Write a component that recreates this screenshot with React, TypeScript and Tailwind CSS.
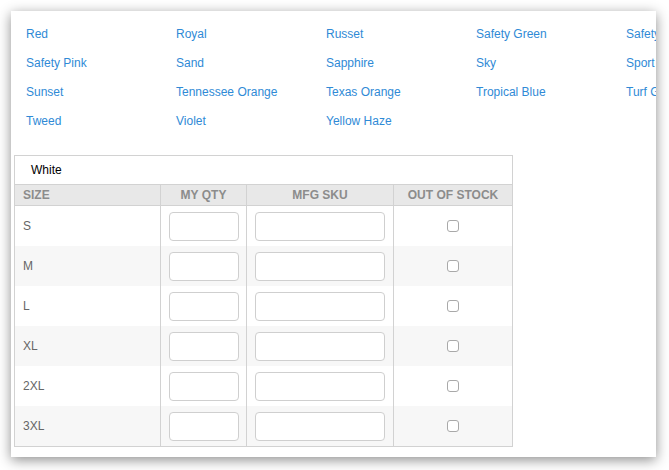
import React from "react";

const colors = [
  "Red", "Royal", "Russet", "Safety Green", "Safety Orange",
  "Safety Pink", "Sand", "Sapphire", "Sky", "Sport Grey",
  "Sunset", "Tennessee Orange", "Texas Orange", "Tropical Blue", "Turf Green",
  "Tweed", "Violet", "Yellow Haze",
];

const sizes = ["S", "M", "L", "XL", "2XL", "3XL"];

export default function App() {
  return (
    <div
      className="w-[669px] h-[470px] bg-white pt-[11px] pl-[11px]"
      style={{ fontFamily: '"Liberation Sans", Arial, sans-serif' }}
    >
      <div className="w-[645px] h-[446px] bg-white overflow-hidden shadow-[0_3px_12px_rgba(0,0,0,0.45)]">
        <div className="grid grid-cols-[150px_150px_150px_150px_150px] w-[750px] pl-[15px] pt-[8px]">
          {colors.map((c) => (
            <div key={c} className="h-[29px] flex items-center text-[12px] text-[#2f8ad6] whitespace-nowrap">
              {c}
            </div>
          ))}
        </div>
        <div className="ml-[3px] mt-[20px] w-[499px] border border-[#d2d2d2]">
          <div className="h-[29px] flex items-center pl-[16px] text-[12px] text-black border-b border-[#d2d2d2]">
            White
          </div>
          <div className="grid grid-cols-[146px_86px_147px_118px] h-[21px] bg-[#e8e8e8] border-b border-[#d2d2d2] text-[12px] font-bold text-[#8c8c8c]">
            <div className="flex items-center pl-[8px] border-r border-[#d2d2d2]">SIZE</div>
            <div className="flex items-center justify-center border-r border-[#d2d2d2]">MY QTY</div>
            <div className="flex items-center justify-center border-r border-[#d2d2d2]">MFG SKU</div>
            <div className="flex items-center justify-center">OUT OF STOCK</div>
          </div>
          {sizes.map((s, i) => (
            <div
              key={s}
              className={`grid grid-cols-[146px_86px_147px_118px] h-[40px] ${i % 2 === 1 ? "bg-[#f7f7f7]" : "bg-white"}`}
            >
              <div className="flex items-center pl-[8px] text-[12px] text-[#666] border-r border-[#d2d2d2]">{s}</div>
              <div className="flex items-center pl-[8px] border-r border-[#d2d2d2]">
                <input className="w-[70px] h-[29px] bg-white border border-[#cfcfcf] rounded-[4px] outline-none" />
              </div>
              <div className="flex items-center pl-[8px] border-r border-[#d2d2d2]">
                <input className="w-[130px] h-[29px] bg-white border border-[#cfcfcf] rounded-[4px] outline-none" />
              </div>
              <div className="flex items-center justify-center">
                <div className="w-[12px] h-[12px] bg-white border border-[#a9a9a9] rounded-[3px]" />
              </div>
            </div>
          ))}
        </div>
      </div>
    </div>
  );
}
